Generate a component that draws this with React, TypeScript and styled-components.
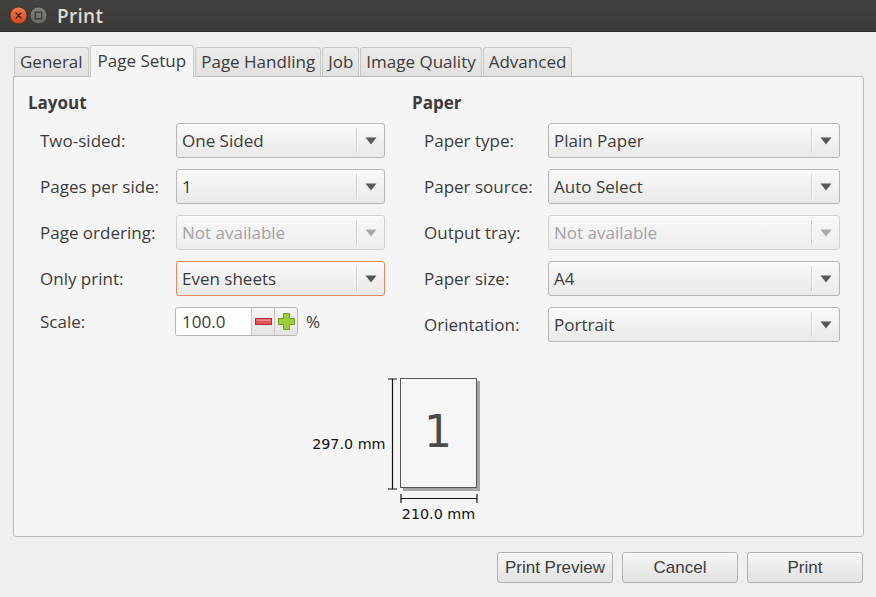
import React from "react";
import styled, { createGlobalStyle, css } from "styled-components";

const Global = createGlobalStyle`
  html, body { margin: 0; padding: 0; overflow: hidden; }
  body { background: #f0efed; }
  * { box-sizing: border-box; }
`;

const UI = `"Open Sans", "Liberation Sans", sans-serif`;

const Window = styled.div`
  width: 876px;
  height: 597px;
  display: flex;
  flex-direction: column;
  background: #f0efed;
  font-family: ${UI};
  color: #3c3c3c;
`;

const TitleBar = styled.div`
  height: 32px;
  flex: none;
  display: flex;
  align-items: center;
  padding-left: 9px;
  gap: 1px;
  background: linear-gradient(#43423e, #3a3935);
  border-bottom: 1px solid #2e2d2a;
`;

const Title = styled.span`
  margin-left: 8px;
  font-family: ${UI};
  font-weight: 600;
  font-size: 19px;
  color: #dfdbd2;
  letter-spacing: 0.3px;
`;

const TabBar = styled.div`
  display: flex;
  align-items: flex-end;
  margin: 13px 0 0 14px;
  gap: 1px;
  position: relative;
  z-index: 1;
  margin-bottom: -1px;
`;

const Tab = styled.div<{ $active?: boolean }>`
  font-size: 17px;
  padding: 0 5px;
  display: flex;
  align-items: center;
  border: 1px solid #c9c7c3;
  border-bottom: none;
  border-radius: 3px 3px 0 0;
  ${(p) =>
    p.$active
      ? css`
          height: 32px;
          background: #f5f5f5;
          padding: 0 7px 3px;
        `
      : css`
          height: 29px;
          margin-bottom: 1px;
          padding-bottom: 1px;
          background: linear-gradient(#ebebea, #e2e1df);
        `}
`;

const Panel = styled.div`
  margin: 0 12px 0 13px;
  flex: 1;
  background: #f5f5f5;
  border: 1px solid #bcbab6;
  border-radius: 0 3px 3px 3px;
  padding: 15px 23px 0 14px;
  display: flex;
  flex-direction: column;
`;

const Columns = styled.div`
  display: grid;
  grid-template-columns: 357px 428px;
  column-gap: 27px;
`;

const Section = styled.div`
  display: flex;
  flex-direction: column;
`;

const Heading = styled.div`
  font-weight: 700;
  font-size: 17px;
  line-height: 22px;
  margin-bottom: 9px;
`;

const Rows = styled.div<{ $label: number }>`
  display: grid;
  grid-template-columns: ${(p) => p.$label}px 1fr;
  row-gap: 11px;
  padding-left: 12px;
  align-items: center;
`;

const Label = styled.div`
  font-size: 17px;
`;

const Combo = styled.div<{ $disabled?: boolean; $focus?: boolean }>`
  height: 35px;
  display: flex;
  align-items: center;
  border: 1px solid ${(p) => (p.$focus ? "#e7875c" : p.$disabled ? "#d2d1cf" : "#b7b6b3")};
  border-radius: 3px;
  background: ${(p) =>
    p.$disabled ? "linear-gradient(#f8f8f8, #eeeeee)" : "linear-gradient(#fafafa, #e9e9e8)"};
  color: ${(p) => (p.$disabled ? "#a3a3a3" : "#3c3c3c")};
  font-size: 17px;
  box-shadow: inset 0 1px 0 #ffffff;
`;

const ComboText = styled.span`
  flex: 1;
  padding-left: 5px;
`;

const ComboButton = styled.span`
  width: 28px;
  align-self: stretch;
  margin: 4px 0;
  border-left: 1px solid #d3d2d0;
  box-shadow: inset 1px 0 0 #fbfbfb;
  display: flex;
  align-items: center;
  justify-content: center;
`;

const Spin = styled.div`
  display: flex;
  align-items: center;
  gap: 8px;
  margin-left: -1px;
`;

const SpinBox = styled.div`
  display: flex;
  height: 29px;
  border: 1px solid #b7b6b3;
  border-radius: 3px;
  overflow: hidden;
`;

const SpinInput = styled.div`
  width: 75px;
  background: #ffffff;
  font-size: 17px;
  display: flex;
  align-items: center;
  padding-left: 6px;
`;

const SpinButton = styled.div`
  width: 23px;
  border-left: 1px solid #c6c5c2;
  background: linear-gradient(#f5f5f5, #e4e4e3);
  display: flex;
  align-items: center;
  justify-content: center;
`;

const Percent = styled.span`
  font-size: 17px;
`;

const Preview = styled.div`
  margin-top: 36px;
  display: grid;
  grid-template-columns: 1fr auto 1fr;
  margin-left: -15px;
  margin-right: -24px;
`;

const DimLeft = styled.div`
  display: flex;
  justify-content: flex-end;
  align-items: stretch;
  gap: 2px;
  padding-right: 3px;
`;

const DimText = styled.span<{ $top?: number }>`
  font-family: "DejaVu Sans", sans-serif;
  font-size: 14.3px;
  color: #111;
  align-self: center;
  padding-top: ${(p) => p.$top ?? 18}px;
`;

const Page = styled.div`
  width: 77px;
  height: 110px;
  border: 1.5px solid #555;
  background: #f6f6f6;
  box-shadow: 3px 3px 0 #a5a5a5;
  display: flex;
  align-items: center;
  justify-content: center;
  font-family: "DejaVu Sans", sans-serif;
  font-size: 44px;
  color: #4a4a4a;
  padding-bottom: 4px;
`;

const DimBottom = styled.div`
  grid-column: 2;
  display: flex;
  flex-direction: column;
  align-items: center;
  padding-top: 3px;
`;

const Footer = styled.div`
  flex: none;
  display: flex;
  justify-content: flex-end;
  gap: 9px;
  padding: 15px 13px 14px 0;
`;

const Button = styled.div`
  width: 116px;
  height: 31px;
  border: 1px solid #b3b2af;
  border-radius: 3px;
  background: linear-gradient(#f6f6f6, #e2e2e1);
  box-shadow: inset 0 1px 0 #ffffff;
  display: flex;
  align-items: center;
  justify-content: center;
  font-family: "Liberation Sans", Arial, sans-serif;
  font-size: 17px;
  color: #3c3c3c;
`;

const Arrow = ({ disabled }: { disabled?: boolean }) => (
  <svg width="12" height="8" viewBox="0 0 12 8">
    <polygon points="0.5,0.5 11.5,0.5 6,7.5" fill={disabled ? "#a8a8a8" : "#585858"} />
  </svg>
);

const CloseIcon = () => (
  <svg width="19" height="19" viewBox="0 0 19 19">
    <defs>
      <linearGradient id="cg" x1="0" y1="0" x2="0" y2="1">
        <stop offset="0" stopColor="#f47c4c" />
        <stop offset="1" stopColor="#d9431a" />
      </linearGradient>
    </defs>
    <circle cx="9.5" cy="9.5" r="8.5" fill="url(#cg)" stroke="#3a2a22" strokeWidth="0.8" />
    <path d="M7 7 L12 12 M12 7 L7 12" stroke="#3b2016" strokeWidth="1.3" strokeLinecap="round" />
  </svg>
);

const MaxIcon = () => (
  <svg width="19" height="19" viewBox="0 0 19 19">
    <defs>
      <linearGradient id="mg" x1="0" y1="0" x2="0" y2="1">
        <stop offset="0" stopColor="#85837e" />
        <stop offset="1" stopColor="#6c6a65" />
      </linearGradient>
    </defs>
    <circle cx="9.5" cy="9.5" r="8.5" fill="url(#mg)" stroke="#2f2e2b" strokeWidth="0.8" />
    <rect x="6.2" y="6.2" width="6.6" height="6.6" fill="none" stroke="#3b3a36" strokeWidth="1.3" />
  </svg>
);

const MinusIcon = () => (
  <svg width="17" height="7" viewBox="0 0 17 7">
    <rect x="0.5" y="0.5" width="16" height="6" fill="#e0545a" stroke="#b12e35" />
    <rect x="1.5" y="1.5" width="14" height="1.5" fill="#f08e90" />
  </svg>
);

const PlusIcon = () => (
  <svg width="17" height="17" viewBox="0 0 17 17">
    <path
      d="M5.5 0.5 H11.5 V5.5 H16.5 V11.5 H11.5 V16.5 H5.5 V11.5 H0.5 V5.5 H5.5 Z"
      fill="#9ccd3a"
      stroke="#6e9a1e"
    />
  </svg>
);

type Row = { label: string; value: string; disabled?: boolean; focus?: boolean };

const layoutRows: Row[] = [
  { label: "Two-sided:", value: "One Sided" },
  { label: "Pages per side:", value: "1" },
  { label: "Page ordering:", value: "Not available", disabled: true },
  { label: "Only print:", value: "Even sheets", focus: true },
];

const paperRows: Row[] = [
  { label: "Paper type:", value: "Plain Paper" },
  { label: "Paper source:", value: "Auto Select" },
  { label: "Output tray:", value: "Not available", disabled: true },
  { label: "Paper size:", value: "A4" },
  { label: "Orientation:", value: "Portrait" },
];

const ComboRow = ({ r }: { r: Row }) => (
  <>
    <Label>{r.label}</Label>
    <Combo $disabled={r.disabled} $focus={r.focus}>
      <ComboText>{r.value}</ComboText>
      <ComboButton>
        <Arrow disabled={r.disabled} />
      </ComboButton>
    </Combo>
  </>
);

const tabs = ["General", "Page Setup", "Page Handling", "Job", "Image Quality", "Advanced"];

export default function App() {
  return (
    <Window>
      <Global />
      <TitleBar>
        <CloseIcon />
        <MaxIcon />
        <Title>Print</Title>
      </TitleBar>
      <TabBar>
        {tabs.map((t) => (
          <Tab key={t} $active={t === "Page Setup"}>
            {t}
          </Tab>
        ))}
      </TabBar>
      <Panel>
        <Columns>
          <Section>
            <Heading>Layout</Heading>
            <Rows $label={136}>
              {layoutRows.map((r) => (
                <ComboRow key={r.label} r={r} />
              ))}
              <Label>Scale:</Label>
              <Spin>
                <SpinBox>
                  <SpinInput>100.0</SpinInput>
                  <SpinButton>
                    <MinusIcon />
                  </SpinButton>
                  <SpinButton>
                    <PlusIcon />
                  </SpinButton>
                </SpinBox>
                <Percent>%</Percent>
              </Spin>
            </Rows>
          </Section>
          <Section>
            <Heading>Paper</Heading>
            <Rows $label={124}>
              {paperRows.map((r) => (
                <ComboRow key={r.label} r={r} />
              ))}
            </Rows>
          </Section>
        </Columns>
        <Preview>
          <DimLeft>
            <DimText>297.0 mm</DimText>
            <svg width="9" height="113" viewBox="0 0 9 113">
              <path d="M0 1 H9 M4.5 1 V111 M0 111 H9" stroke="#111" strokeWidth="1.2" fill="none" />
            </svg>
          </DimLeft>
          <Page>1</Page>
          <div />
          <DimBottom>
            <svg width="78" height="9" viewBox="0 0 78 9">
              <path d="M1 0 V9 M1 4.5 H77 M77 0 V9" stroke="#111" strokeWidth="1.2" fill="none" />
            </svg>
            <DimText as="div" $top={3}>210.0 mm</DimText>
          </DimBottom>
        </Preview>
      </Panel>
      <Footer>
        <Button>Print Preview</Button>
        <Button>Cancel</Button>
        <Button>Print</Button>
      </Footer>
    </Window>
  );
}
